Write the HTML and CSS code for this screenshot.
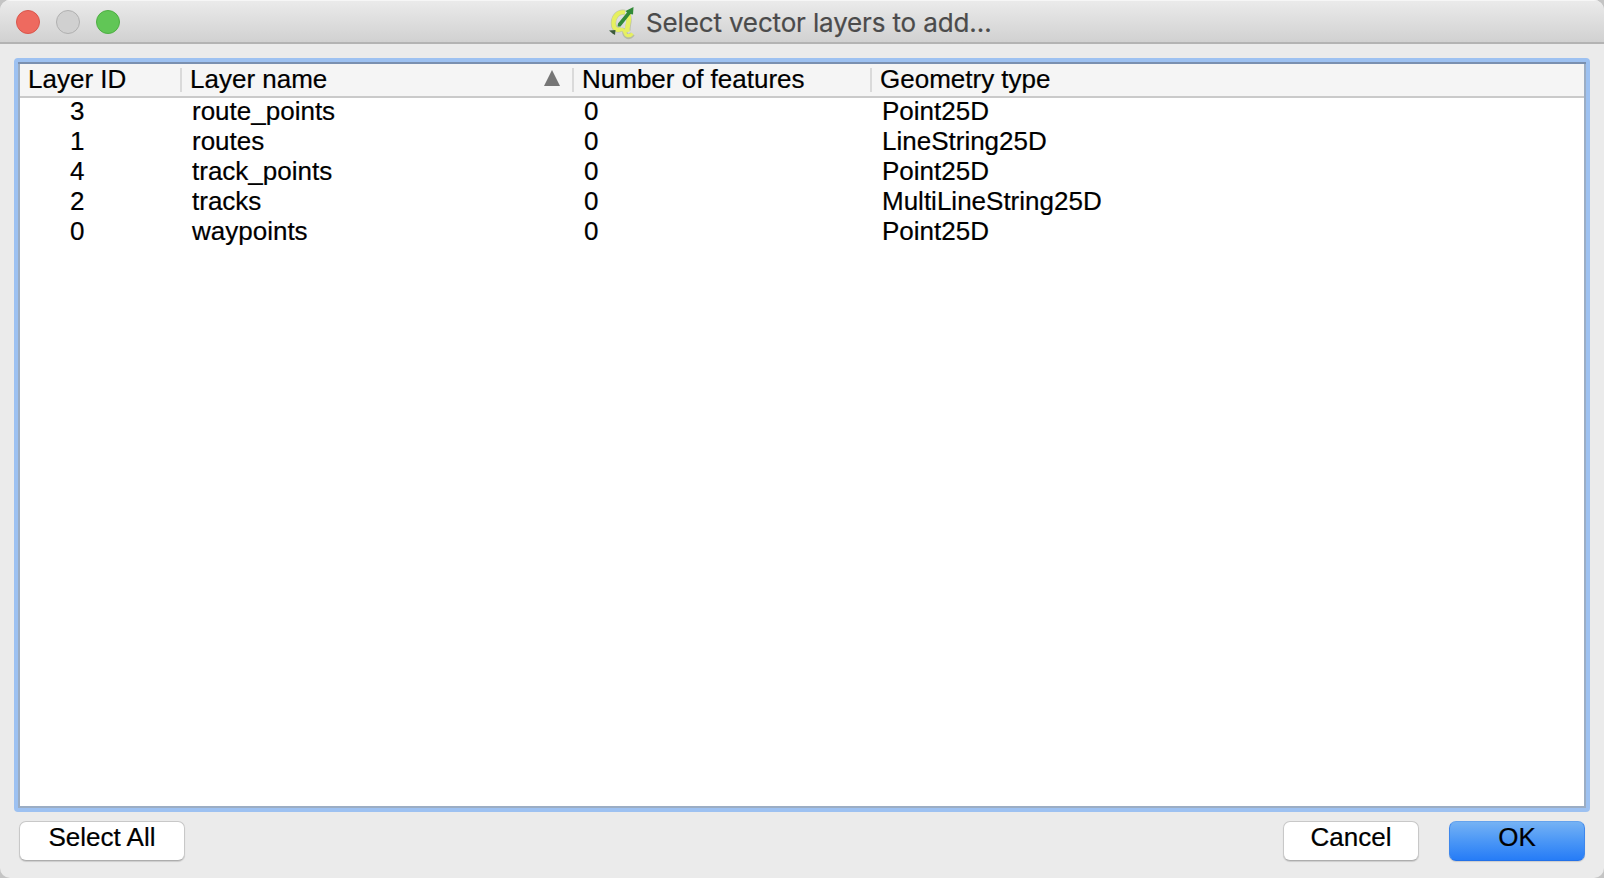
FILE: index.html
```html
<!DOCTYPE html>
<html lang="en">
<head>
<meta charset="utf-8">
<title>Select vector layers to add…</title>
<link rel="stylesheet" href="styles.css">
</head>
<body>
<div class="window">
  <header class="titlebar">
    <div class="lights"><span class="light close"></span><span class="light minimize"></span><span class="light zoom"></span></div>
    <svg class="app-icon" width="30" height="36" viewBox="0 0 30 36">
      <g fill="none" stroke="#7f8e48" stroke-opacity=".35" stroke-width="5.4">
        <path d="M17 8.500 C10 7 5.500 13 5.500 19 C5.500 25 9 27 13 25"/>
        <path d="M20 11 C23 16 19 21 20 27 M14 26.500 C18 26 16 31 19 32 C21 33 23 32 24.500 30"/>
      </g>
      <g fill="none" stroke="#e6f060" stroke-width="4.2">
        <path d="M17 8.500 C10 7 5.500 13 5.500 19 C5.500 25 9 27 13 25"/>
        <path d="M20 10 C23 16 18 22 19.500 28" stroke-width="4.6"/>
        <path d="M12 25.500 C18 24 16 31 19 31.500 C21 32 23 31.500 24.500 29.500" stroke-width="3.2"/>
      </g>
      <path d="M25.500 3 L25 10.500 L22.500 10 L12.500 22.500 L9.500 22.500 L10 19.500 L19 8.500 L17.500 7 Z" fill="#328a38"/>
      <path d="M1 26.500 L7.500 26 L7 31 L4.500 29.500 Z" fill="#3c5a3c"/>
    </svg>
    <h1 class="title">Select vector layers to add…</h1>
  </header>
  <main class="content">
    <div class="table">
      <div class="row head">
        <div class="cell">Layer ID</div>
        <div class="cell">Layer name<svg class="sort" width="16" height="16" viewBox="0 0 16 16"><path d="M8 0 L16 16 H0 Z" fill="#767676"/></svg></div>
        <div class="cell">Number of features</div>
        <div class="cell">Geometry type</div>
      </div>
      <div class="row"><div class="cell id">3</div><div class="cell">route_points</div><div class="cell">0</div><div class="cell">Point25D</div></div>
      <div class="row"><div class="cell id">1</div><div class="cell">routes</div><div class="cell">0</div><div class="cell">LineString25D</div></div>
      <div class="row"><div class="cell id">4</div><div class="cell">track_points</div><div class="cell">0</div><div class="cell">Point25D</div></div>
      <div class="row"><div class="cell id">2</div><div class="cell">tracks</div><div class="cell">0</div><div class="cell">MultiLineString25D</div></div>
      <div class="row"><div class="cell id">0</div><div class="cell">waypoints</div><div class="cell">0</div><div class="cell">Point25D</div></div>
    </div>
    <footer class="actions">
      <button class="button select-all">Select All</button>
      <button class="button cancel">Cancel</button>
      <button class="button primary">OK</button>
    </footer>
  </main>
</div>
</body>
</html>
```
FILE: styles.css
```css
* { box-sizing: border-box; }
body { margin: 0; background: #c4c4c4; font-family: "Liberation Sans", Arial, sans-serif; font-size: 26px; color: #000; -webkit-text-stroke: 0.2px; }
.window { height: 878px; display: flex; flex-direction: column; overflow: hidden; background: #ebebeb; border-radius: 10px; }
.titlebar { flex: none; height: 44px; display: flex; align-items: flex-start; background: linear-gradient(#ebebeb, #d1d1d1); border-bottom: 2px solid #b3b3b3; box-shadow: inset 0 1px #f6f6f6; }
.lights { display: flex; gap: 16px; width: 608px; padding: 10px 0 0 16px; }
.light { width: 24px; height: 24px; border-radius: 50%; border: 1px solid; }
.close { background: #ee6a5f; border-color: #d9564c; }
.minimize { background: #d0d0d0; border-color: #b0b0b0; }
.zoom { background: #61c656; border-color: #4eae43; }
.app-icon { flex: none; margin-top: 4px; filter: blur(0.4px); }
.title { margin: 7px 0 0 8px; font: 400 26px/32px Inter, sans-serif; letter-spacing: -0.15px; color: #4b4b4b; white-space: nowrap; }
.content { flex: 1; display: flex; flex-direction: column; padding: 14px 14px 0; }
.table { height: 754px; border: 4px solid #9dc1f1; border-radius: 4px; background: #fff; box-shadow: inset 0 2px #7a90b0, inset 2px 0 #9badc4, inset -2px 0 #9badc4, inset 0 -2px #9badc4; padding: 2px; }
.row { display: grid; grid-template-columns: 162px 392px 298px 1fr; height: 30px; line-height: 26px; white-space: nowrap; }
.cell { padding-left: 10px; }
.cell.id { padding-left: 50px; }
.head { height: 34px; line-height: 30px; background: #f5f5f5; border-bottom: 2px solid #cacaca; }
.head .cell { display: flex; align-items: flex-start; justify-content: space-between; padding-left: 8px; padding-right: 14px; }
.head .cell:not(:last-child) { background: linear-gradient(#dadada, #dadada) right 0 center / 2px 24px no-repeat; }
.sort { margin-top: 6px; }
.actions { display: flex; padding: 9px 5px 0; }
.button { height: 40px; width: 136px; padding: 0 0 7px; border: 1px solid #c8c8c8; border-bottom-color: #adadad; border-radius: 7px; background: #fff; box-shadow: 0 1px 1px #0002; font: inherit; line-height: 29px; color: #000; -webkit-text-stroke: 0.2px; }
.select-all { width: 166px; margin-right: auto; }
.cancel { margin-right: 30px; }
.primary { background: linear-gradient(#75b2f4, #4b97f6 50%, #267cf7); border-color: #65a3ed #3e87ec #2371e8; }
```
